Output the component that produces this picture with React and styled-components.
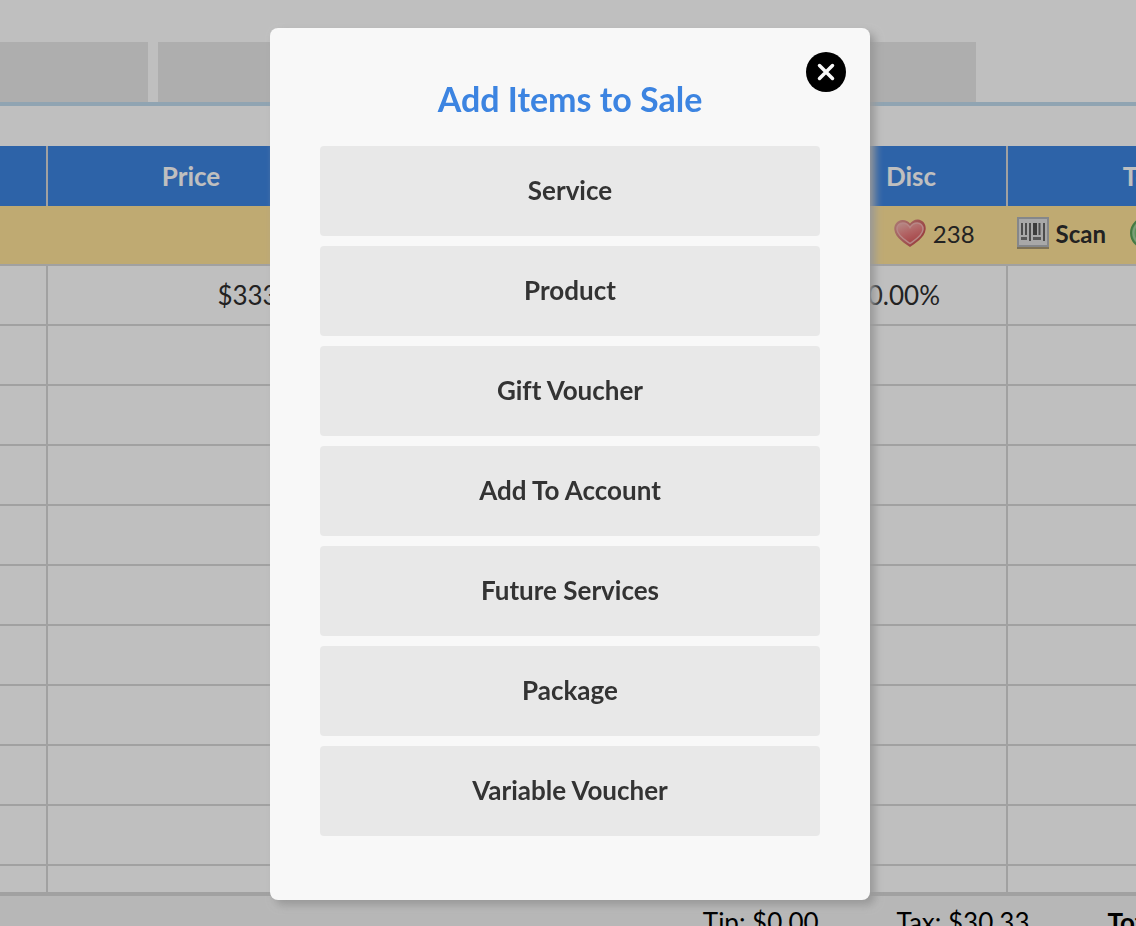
import React from 'react'
import styled, { createGlobalStyle } from 'styled-components'

const GlobalStyle = createGlobalStyle`
  * {
    box-sizing: border-box;
  }
  body {
    margin: 0;
    background: #fff;
    color: #2e2e2e;
    font-family: Lato, "Liberation Sans", sans-serif;
    font-size: 26px;
    font-variant-ligatures: none;
  }
`

const Page = styled.div`
  display: flex;
  flex-direction: column;
  height: 100vh;
  overflow: hidden;
`

const Tabs = styled.div`
  display: flex;
  justify-content: flex-end;
  gap: 10px;
  padding: 42px 160px 0 0;
  border-bottom: 4px solid #c0dbee;
`

const Tab = styled.div`
  flex: 0 0 266px;
  height: 60px;
  background: #e8e8e8;
`

const TableArea = styled.div`
  flex: 1;
  min-height: 0;
  margin-top: 40px;
  overflow: hidden;
`

const SaleTable = styled.table`
  width: calc(100% + 160px);
  table-layout: fixed;
  border-collapse: separate;
  border-spacing: 0;
`

const Col = styled.col`
  width: ${props => props.$width || 'auto'};
`

const Th = styled.th`
  height: 60px;
  padding: 0;
  background: #3c84e1;
  color: #fff;
  border-right: 2px solid #d7d7d7;
`

const Td = styled.td`
  height: 60px;
  padding: 0 ${props => props.$end || '20px'} 0 0;
  text-align: right;
  border-right: 2px solid #d7d7d7;
  border-bottom: 2px solid #d7d7d7;
`

const ClientCell = styled(Td)`
  background: #ffe399;
`

const ClientBar = styled.div`
  display: flex;
  align-items: center;
  justify-content: flex-end;
  gap: 24px;
  padding-bottom: 4px;
  font-size: 24px;
`

const Stat = styled.span`
  display: flex;
  align-items: center;
  gap: 7px;
  margin-right: 18px;
`

const ScanLink = styled.a`
  display: flex;
  align-items: center;
  gap: 7px;
  color: inherit;
  font-weight: bold;
  text-decoration: none;
`

const Footer = styled.footer`
  display: flex;
  justify-content: flex-end;
  gap: 78px;
  flex: 0 0 34px;
  margin-right: -28px;
  padding-top: 10px;
  border-top: 4px solid #d7d7d7;
  background: #f5f5f5;
  color: #000;
  line-height: 32px;
  white-space: nowrap;
  overflow: hidden;
`

const Backdrop = styled.div`
  position: fixed;
  inset: 0;
  display: flex;
  justify-content: center;
  align-items: flex-start;
  padding: 28px 0 0 4px;
  background: rgba(0, 0, 0, 0.25);
`

const Dialog = styled.section`
  position: relative;
  width: 600px;
  max-width: 100%;
  padding: 47px 50px 64px;
  border-radius: 8px;
  background: #f8f8f8;
  box-shadow: 5px 5px 8px #989898;
`

const Title = styled.h1`
  margin: 0 0 23px;
  color: #3c84e1;
  font-size: 34px;
  line-height: 48px;
  text-align: center;
`

const Options = styled.div`
  display: flex;
  flex-direction: column;
  gap: 10px;
`

const OptionButton = styled.button`
  height: 90px;
  padding: 0 0 2px;
  border: 0;
  border-radius: 4px;
  background: #e8e8e8;
  color: #333;
  font: bold 26px Lato, "Liberation Sans", sans-serif;
  font-variant-ligatures: none;
  cursor: pointer;
  &:hover {
    background: #dedede;
  }
`

const CloseButton = styled.button`
  position: absolute;
  top: 24px;
  right: 24px;
  width: 40px;
  height: 40px;
  padding: 0;
  border: 0;
  border-radius: 50%;
  background: #000;
  cursor: pointer;
  svg {
    display: block;
  }
`

const HeartIcon = () => (
  <svg width="32" height="32" viewBox="0 0 32 32" aria-hidden="true">
    <defs>
      <linearGradient id="heartFill" x1="0.1" y1="0" x2="0.6" y2="1">
        <stop offset="0" stopColor="#f3b9b3" />
        <stop offset="0.5" stopColor="#ed8586" />
        <stop offset="1" stopColor="#dd5a5e" />
      </linearGradient>
      <linearGradient id="heartEdge" x1="0" y1="0" x2="1" y2="0.6">
        <stop offset="0" stopColor="#e5a39b" />
        <stop offset="1" stopColor="#cc5052" />
      </linearGradient>
    </defs>
    <path d="M16 30C12 27 1 21 .3 12.500 0 7 3.500 3.500 8 3c3.200-.3 6 1 8 3.500C18 4 20.800 2.200 24 2.500c4.500.4 8 4 7.700 9.500C31 21 20 27 16 30z" fill="url(#heartEdge)" />
    <path d="M16 26.500C12 23.500 3.500 19 3 12.500 2.700 8.500 5.500 6 8.800 6c3.200 0 5.500 1.500 7.200 4.500C17.700 7.500 20 6 23.200 6c3.300 0 6.100 2.500 5.800 6.500C28.500 19 20 23.500 16 26.500z" fill="url(#heartFill)" stroke="#f5b5b3" strokeWidth="1.500" />
  </svg>
)

const BarcodeIcon = () => (
  <svg width="32" height="32" viewBox="0 0 32 32" aria-hidden="true">
    <rect y="29" width="32" height="3" fill="#a89873" />
    <rect x="1" y="1" width="30" height="28" fill="#e0e0e0" stroke="#b2b4b8" strokeWidth="2" />
    <path d="M5 6v12M9 6v12M13 6v18M22.500 6v12M27 6v18" stroke="#666" strokeWidth="2" />
    <path d="M18 6v12" stroke="#505050" strokeWidth="4" />
    <path d="M4 21.500h6M16 21.500h8" stroke="#747474" strokeWidth="3" />
  </svg>
)

const AddIcon = () => (
  <svg width="32" height="32" viewBox="0 0 32 32" aria-hidden="true">
    <circle cx="16" cy="16" r="15" fill="#79c279" stroke="#5ba25b" strokeWidth="2" />
    <circle cx="16" cy="16" r="12.500" fill="none" stroke="#a5d3a0" strokeWidth="2" />
    <path d="M16 9v14M9 16h14" stroke="#fff" strokeWidth="4" />
  </svg>
)

const saleItems = ['Service', 'Product', 'Gift Voucher', 'Add To Account', 'Future Services', 'Package', 'Variable Voucher']
const tabs = [1, 2, 3, 4]
const emptyRows = [1, 2, 3, 4, 5, 6, 7, 8, 9, 10]

export default function App() {
  return (
    <>
      <GlobalStyle />
      <Page>
        <Tabs>
          {tabs.map(tab => <Tab key={tab} />)}
        </Tabs>

        <TableArea>
          <SaleTable>
            <colgroup>
              <Col $width="48px" />
              <Col $width="288px" />
              <Col />
              <Col $width="192px" />
              <Col $width="288px" />
            </colgroup>
            <thead>
              <tr>
                <Th />
                <Th>Price</Th>
                <Th />
                <Th>Disc</Th>
                <Th>Total</Th>
              </tr>
            </thead>
            <tbody>
              <tr>
                <ClientCell colSpan={5} $end="132px">
                  <ClientBar>
                    <Stat><HeartIcon />238</Stat>
                    <ScanLink href="#scan"><BarcodeIcon />Scan</ScanLink>
                    <AddIcon />
                  </ClientBar>
                </ClientCell>
              </tr>
              <tr>
                <Td />
                <Td>$333.33</Td>
                <Td />
                <Td $end="66px">0.00%</Td>
                <Td />
              </tr>
              {emptyRows.map(row => (
                <tr key={row}>
                  <Td />
                  <Td />
                  <Td />
                  <Td />
                  <Td />
                </tr>
              ))}
            </tbody>
          </SaleTable>
        </TableArea>

        <Footer>
          <span>Tip: $0.00</span>
          <span>Tax: $30.33</span>
          <strong>Total</strong>
        </Footer>
      </Page>

      <Backdrop>
        <Dialog role="dialog" aria-modal="true" aria-labelledby="dialog-title">
          <CloseButton type="button" aria-label="Close">
            <svg width="40" height="40" viewBox="0 0 40 40">
              <path d="M13.500 13.500l13 13M26.500 13.500l-13 13" stroke="#f8f8f8" strokeWidth="3.500" strokeLinecap="round" />
            </svg>
          </CloseButton>
          <Title id="dialog-title">Add Items to Sale</Title>
          <Options>
            {saleItems.map(item => (
              <OptionButton type="button" key={item}>{item}</OptionButton>
            ))}
          </Options>
        </Dialog>
      </Backdrop>
    </>
  )
}
